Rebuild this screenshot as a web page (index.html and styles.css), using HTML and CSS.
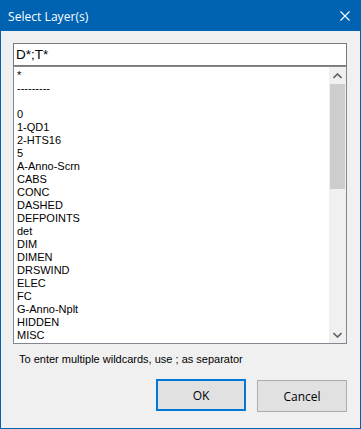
FILE: index.html
```html
<!DOCTYPE html>
<html>
<head>
<meta charset="utf-8">
<link rel="stylesheet" href="styles.css">
</head>
<body>
<div class="window">
  <div class="titlebar">
    <span class="title">Select Layer(s)</span>
    <svg class="close" width="10" height="10" viewBox="0 0 10 10"><path d="M0.5 0.5 L9.5 9.5 M9.5 0.5 L0.5 9.5" stroke="#fff" stroke-width="1.1" fill="none"/></svg>
  </div>
  <div class="content">
    <div class="edit">D*;T*</div>
    <div class="list">
      <div class="items">
        <div>*</div>
        <div>---------</div>
        <div>&nbsp;</div>
        <div>0</div>
        <div>1-QD1</div>
        <div>2-HTS16</div>
        <div>5</div>
        <div>A-Anno-Scrn</div>
        <div>CABS</div>
        <div>CONC</div>
        <div>DASHED</div>
        <div>DEFPOINTS</div>
        <div>det</div>
        <div>DIM</div>
        <div>DIMEN</div>
        <div>DRSWIND</div>
        <div>ELEC</div>
        <div>FC</div>
        <div>G-Anno-Nplt</div>
        <div>HIDDEN</div>
        <div>MISC</div>
      </div>
      <div class="scrollbar">
        <div class="arrow"><svg width="9" height="6" viewBox="0 0 9 6"><path d="M0.5 5 L4.5 1 L8.5 5" stroke="#606060" stroke-width="1.6" fill="none"/></svg></div>
        <div class="thumb"></div>
        <div class="track"></div>
        <div class="arrow"><svg width="9" height="6" viewBox="0 0 9 6"><path d="M0.5 1 L4.5 5 L8.5 1" stroke="#606060" stroke-width="1.6" fill="none"/></svg></div>
      </div>
    </div>
    <div class="hint">To enter multiple wildcards, use ; as separator</div>
    <div class="buttons">
      <div class="btn default">OK</div>
      <div class="btn cancel">Cancel</div>
    </div>
  </div>
</div>
</body>
</html>
```
FILE: styles.css
```css
html, body {
  margin: 0;
  padding: 0;
  background: #f0f0f0;
}
.window {
  width: 361px;
  height: 429px;
  box-sizing: border-box;
  border: 1px solid #0063b1;
  border-top: none;
  background: #f0f0f0;
  display: flex;
  flex-direction: column;
}
.titlebar {
  height: 31px;
  background: #0063b1;
  display: flex;
  align-items: center;
  justify-content: space-between;
  padding: 0 11px 0 8px;
  margin: 0 -1px;
}
.title {
  color: #fff;
  font-family: "Open Sans", "Noto Sans", sans-serif;
  font-size: 12px;
  letter-spacing: 0.05px;
  padding-top: 1px;
}
.close {
  display: block;
  margin-top: 1px;
}
.content {
  padding: 12px 13px 0 12px;
  display: flex;
  flex-direction: column;
}
.edit {
  height: 23px;
  box-sizing: border-box;
  border: 1px solid #7a7a7a;
  background: #fff;
  font-family: "Liberation Sans", Arial, sans-serif;
  font-size: 13.5px;
  line-height: 21px;
  padding-left: 2px;
  color: #000;
}
.list {
  height: 278px;
  box-sizing: border-box;
  border: 1px solid #828790;
  background: #fff;
  display: flex;
}
.items {
  flex: 1;
  padding: 2px 0 0 3px;
  font-family: "Liberation Sans", Arial, sans-serif;
  font-size: 11px;
  line-height: 13px;
  color: #000;
  overflow: hidden;
}
.scrollbar {
  width: 17px;
  background: #f0f0f0;
  display: flex;
  flex-direction: column;
}
.arrow {
  height: 17px;
  display: flex;
  align-items: center;
  justify-content: center;
}
.arrow svg { display: block; }
.thumb {
  height: 105px;
  background: #cdcdcd;
  margin: 0 1px;
}
.track { flex: 1; }
.hint {
  margin-top: 7px;
  padding-left: 6px;
  font-family: "Liberation Sans", Arial, sans-serif;
  font-size: 11px;
  line-height: 16px;
  color: #000;
}
.buttons {
  margin-top: 12px;
  display: flex;
  justify-content: flex-end;
  align-items: flex-start;
  gap: 11px;
}
.btn {
  width: 90px;
  height: 32px;
  box-sizing: border-box;
  background: #e1e1e1;
  border: 1px solid #adadad;
  font-family: "Open Sans", "Noto Sans", sans-serif;
  font-size: 12px;
  display: flex;
  align-items: center;
  justify-content: center;
  color: #000;
}
.btn.default {
  border: 2px solid #0078d7;
}
.btn.cancel {
  margin-top: 1px;
}
```
